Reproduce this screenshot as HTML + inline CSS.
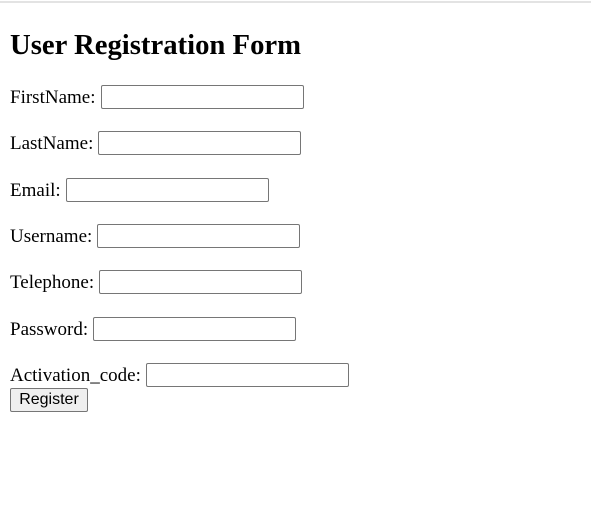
<!DOCTYPE html>
<html><head><style>
body{margin:0;width:591px;height:510px;background:#fff;font-family:"Liberation Serif",serif;color:#000;position:relative;overflow:hidden}
.top{position:absolute;left:0;top:1px;width:591px;height:2px;background:#e3e3e3}
h1{position:absolute;left:10px;top:29px;margin:0;font-size:28.7px;font-weight:bold;line-height:32px}
.row{position:absolute;left:10px;font-size:19px;line-height:24px;display:flex;align-items:center;white-space:nowrap}
.row span{margin-right:5px;position:relative;top:1px}
.in{width:201px;height:22px;border:1px solid #767676;border-radius:2px;box-sizing:content-box}
.btn{position:absolute;left:10px;top:388px;width:76px;height:22px;border:1px solid #767676;border-radius:2px;background:#efefef;font-family:"Liberation Sans",sans-serif;font-size:16px;line-height:22px;text-align:center}
</style></head><body>
<div class="top"></div>
<h1>User Registration Form</h1>
<div class="row" style="top:85px"><span>FirstName:</span><div class="in"></div></div>
<div class="row" style="top:131px"><span>LastName:</span><div class="in"></div></div>
<div class="row" style="top:178px"><span>Email:</span><div class="in"></div></div>
<div class="row" style="top:224px"><span>Username:</span><div class="in"></div></div>
<div class="row" style="top:270px"><span>Telephone:</span><div class="in"></div></div>
<div class="row" style="top:317px"><span>Password:</span><div class="in"></div></div>
<div class="row" style="top:363px"><span>Activation_code:</span><div class="in"></div></div>
<div class="btn">Register</div>
</body></html>
